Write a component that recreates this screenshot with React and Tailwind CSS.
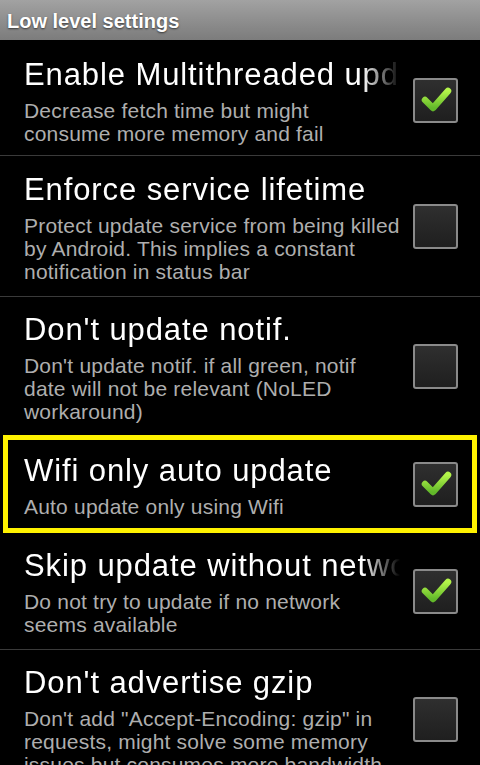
const ITEMS = [
  {
    title: "Enable Multithreaded update",
    lines: ["Decrease fetch time but might", "consume more memory and fail"],
    checked: true,
    height: "h-[115px] pt-[4px]",
  },
  {
    title: "Enforce service lifetime",
    lines: [
      "Protect update service from being killed",
      "by Android. This implies a constant",
      "notification in status bar",
    ],
    checked: false,
    height: "h-[141px]",
  },
  {
    title: "Don't update notif.",
    lines: [
      "Don't update notif. if all green, notif",
      "date will not be relevant (NoLED",
      "workaround)",
    ],
    checked: false,
    height: "h-[138px]",
    noDivider: true,
  },
  {
    title: "Wifi only auto update",
    lines: ["Auto update only using Wifi"],
    checked: true,
    height: "h-[98px]",
    focused: true,
  },
  {
    title: "Skip update without network",
    lines: ["Do not try to update if no network", "seems available"],
    checked: true,
    height: "h-[117px]",
  },
  {
    title: "Don't advertise gzip",
    lines: [
      "Don't add \"Accept-Encoding: gzip\" in",
      "requests, might solve some memory",
      "issues but consumes more bandwidth",
    ],
    checked: false,
    height: "h-[140px]",
  },
];

function CheckBox({ checked }) {
  return (
    <div className="h-[45px] w-[45px] shrink-0 rounded-[3px] border-2 border-[#8a8a8a] bg-gradient-to-b from-[#2f2f2f] to-[#1f1f1f]">
      {checked && (
        <svg viewBox="0 0 41 41" className="h-full w-full">
          <defs>
            <linearGradient id="chk" x1="0" y1="0" x2="0" y2="1">
              <stop offset="0" stopColor="#b4f54a" />
              <stop offset="1" stopColor="#62b82a" />
            </linearGradient>
          </defs>
          <path
            d="M10 20 L18 28 L33 11"
            fill="none"
            stroke="url(#chk)"
            strokeWidth="6.5"
            strokeLinecap="round"
            strokeLinejoin="round"
          />
        </svg>
      )}
    </div>
  );
}

function RowBody({ item, focused }) {
  return (
    <div className="flex h-full items-center">
      <div
        className={`min-w-0 flex-1 pr-[13px] ${focused ? "pl-[16px]" : "pl-[24px]"}`}
      >
        <div className="overflow-hidden whitespace-nowrap text-[31px] leading-[40px] tracking-[0.9px] text-white [mask-image:linear-gradient(to_right,black_90%,transparent)]">
          {item.title}
        </div>
        <div className="mt-[4px] text-[21px] leading-[23px] tracking-[0.2px] text-[#aeaeae]">
          {item.lines.map((line, i) => (
            <div key={i} className="whitespace-nowrap">
              {line}
            </div>
          ))}
        </div>
      </div>
      <div className={focused ? "mr-[14px]" : "mr-[22px]"}>
        <CheckBox checked={item.checked} />
      </div>
    </div>
  );
}

function SettingRow({ item }) {
  if (item.focused) {
    return (
      <div className={`${item.height} shrink-0 px-[3px]`}>
        <div className="h-full border-[5px] border-[#fff200]">
          <RowBody item={item} focused />
        </div>
      </div>
    );
  }

  return (
    <div
      className={`${item.height} shrink-0 ${
        item.noDivider ? "" : "border-b border-[#3a3a3a]"
      }`}
    >
      <RowBody item={item} />
    </div>
  );
}

export default function App() {
  return (
    <div className="flex h-[765px] w-[480px] flex-col overflow-hidden bg-black font-['Liberation_Sans',Arial,sans-serif]">
      <div className="flex h-[41px] shrink-0 items-center border-b border-black bg-gradient-to-b from-[#a2a2a2] to-[#7c7c7c] pl-[7px] pt-[2px]">
        <span className="text-[20px] font-bold text-white [text-shadow:0_1px_2px_rgba(0,0,0,0.6)]">
          Low level settings
        </span>
      </div>
      {ITEMS.map((item, i) => (
        <SettingRow key={i} item={item} />
      ))}
    </div>
  );
}
